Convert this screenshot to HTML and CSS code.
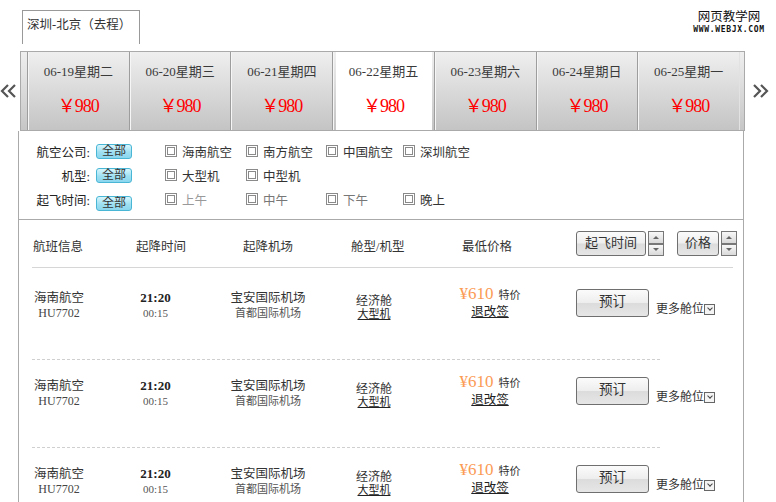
FILE: index.html
```html
<!DOCTYPE html>
<html lang="zh-CN">
<head>
<meta charset="utf-8">
<title>深圳-北京（去程）</title>
<link rel="stylesheet" href="styles.css">
</head>
<body>
<div class="page">
  <div class="head">
    <div class="route">深圳-北京（去程）</div>
    <div class="logo">
      <div class="logo-cn">网页教学网</div>
      <div class="logo-en">WWW.WEBJX.COM</div>
    </div>
  </div>

  <div class="dates">
    <a class="nav prev" href="#">
      <svg width="16" height="14" viewBox="0 0 16 14"><path d="M8 1L2 7l6 6M15 1L9 7l6 6" fill="none" stroke="#555" stroke-width="2.2"/></svg>
    </a>
    <ul class="strip">
      <li class="day"><span class="d">06-19星期二</span><span class="p">￥980</span></li>
      <li class="day"><span class="d">06-20星期三</span><span class="p">￥980</span></li>
      <li class="day"><span class="d">06-21星期四</span><span class="p">￥980</span></li>
      <li class="day on"><span class="d">06-22星期五</span><span class="p">￥980</span></li>
      <li class="day"><span class="d">06-23星期六</span><span class="p">￥980</span></li>
      <li class="day"><span class="d">06-24星期日</span><span class="p">￥980</span></li>
      <li class="day last"><span class="d">06-25星期一</span><span class="p">￥980</span></li>
    </ul>
    <a class="nav next" href="#">
      <svg width="16" height="14" viewBox="0 0 16 14"><path d="M1 1l6 6-6 6M8 1l6 6-6 6" fill="none" stroke="#555" stroke-width="2.2"/></svg>
    </a>
  </div>

  <div class="panel">
    <div class="filters">
      <div class="frow">
        <span class="flabel">航空公司:</span>
        <span class="all">全部</span>
        <div class="opts">
          <label class="opt"><i class="cb"></i>海南航空</label>
          <label class="opt"><i class="cb"></i>南方航空</label>
          <label class="opt"><i class="cb"></i>中国航空</label>
          <label class="opt"><i class="cb"></i>深圳航空</label>
        </div>
      </div>
      <div class="frow">
        <span class="flabel">机型:</span>
        <span class="all">全部</span>
        <div class="opts">
          <label class="opt"><i class="cb"></i>大型机</label>
          <label class="opt"><i class="cb"></i>中型机</label>
        </div>
      </div>
      <div class="frow">
        <span class="flabel">起飞时间:</span>
        <span class="all low">全部</span>
        <div class="opts">
          <label class="opt dim"><i class="cb"></i>上午</label>
          <label class="opt mid"><i class="cb"></i>中午</label>
          <label class="opt mid"><i class="cb"></i>下午</label>
          <label class="opt"><i class="cb"></i>晚上</label>
        </div>
      </div>
    </div>

    <div class="table">
      <div class="thead">
        <span class="th w1">航班信息</span>
        <span class="th w2">起降时间</span>
        <span class="th w3">起降机场</span>
        <span class="th w4">舱型/机型</span>
        <span class="th w5">最低价格</span>
        <span class="sort">
          <span class="btn sbtn t">起飞时间</span>
          <span class="spin"><i class="up"></i><i class="down"></i></span>
        </span>
        <span class="sort">
          <span class="btn sbtn pr">价格</span>
          <span class="spin"><i class="up"></i><i class="down"></i></span>
        </span>
      </div>

      <div class="rows">
        <div class="row">
          <div class="c c1"><div class="l1">海南航空</div><div class="l2">HU7702</div></div>
          <div class="c c2"><div class="l1 b">21:20</div><div class="l2 s">00:15</div></div>
          <div class="c c3"><div class="l1">宝安国际机场</div><div class="l2 s">首都国际机场</div></div>
          <div class="c c4"><div class="m1">经济舱</div><div class="m2"><a href="#">大型机</a></div></div>
          <div class="c c5"><div class="p1"><span class="amt">¥610</span> <span class="tj">特价</span></div><div class="p2"><a href="#">退改签</a></div></div>
          <span class="btn book">预订</span>
          <span class="more">更多舱位<i class="dd"></i></span>
        </div>
        <div class="sep"></div>
        <div class="row">
          <div class="c c1"><div class="l1">海南航空</div><div class="l2">HU7702</div></div>
          <div class="c c2"><div class="l1 b">21:20</div><div class="l2 s">00:15</div></div>
          <div class="c c3"><div class="l1">宝安国际机场</div><div class="l2 s">首都国际机场</div></div>
          <div class="c c4"><div class="m1">经济舱</div><div class="m2"><a href="#">大型机</a></div></div>
          <div class="c c5"><div class="p1"><span class="amt">¥610</span> <span class="tj">特价</span></div><div class="p2"><a href="#">退改签</a></div></div>
          <span class="btn book">预订</span>
          <span class="more">更多舱位<i class="dd"></i></span>
        </div>
        <div class="sep"></div>
        <div class="row">
          <div class="c c1"><div class="l1">海南航空</div><div class="l2">HU7702</div></div>
          <div class="c c2"><div class="l1 b">21:20</div><div class="l2 s">00:15</div></div>
          <div class="c c3"><div class="l1">宝安国际机场</div><div class="l2 s">首都国际机场</div></div>
          <div class="c c4"><div class="m1">经济舱</div><div class="m2"><a href="#">大型机</a></div></div>
          <div class="c c5"><div class="p1"><span class="amt">¥610</span> <span class="tj">特价</span></div><div class="p2"><a href="#">退改签</a></div></div>
          <span class="btn book">预订</span>
          <span class="more">更多舱位<i class="dd"></i></span>
        </div>
      </div>
    </div>
  </div>
</div>
</body>
</html>
```

FILE: styles.css
```css
html, body {
  margin: 0;
  padding: 0;
  overflow: hidden;
  background: #fff;
}
body {
  font-family: "Liberation Serif", "Noto Sans CJK SC", serif;
  font-size: 12.5px;
  color: #333;
}
a { color: #222; }
ul { margin: 0; padding: 0; list-style: none; }

.page { width: 776px; }

/* header */
.head {
  display: flex;
  height: 51px;
}
.route {
  box-sizing: border-box;
  width: 118px;
  height: 34px;
  margin: 10px 0 0 22px;
  padding-left: 4px;
  border: 1px solid #999;
  border-bottom: 0;
  line-height: 28px;
  white-space: nowrap;
}
.logo {
  margin: 8px 10px 0 auto;
  width: 74px;
  text-align: center;
}
.logo-cn {
  font-family: "Noto Sans CJK SC", sans-serif;
  font-size: 12.5px;
  line-height: 16px;
  color: #111;
}
.logo-en {
  font-family: "DejaVu Sans Mono", monospace;
  font-weight: bold;
  font-size: 8px;
  line-height: 9px;
  color: #111;
  letter-spacing: 0.7px;
  margin-top: 1px;
  white-space: nowrap;
}

/* date strip */
.dates {
  display: flex;
  align-items: center;
  height: 80px;
}
.nav {
  display: flex;
  justify-content: flex-start;
  width: 20px;
  flex-shrink: 0;
}
.nav.next { width: 31px; padding-left: 8px; box-sizing: border-box; }
.strip {
  box-sizing: border-box;
  display: flex;
  flex-shrink: 0;
  width: 725px;
  height: 80px;
  padding: 0 4px 0 6px;
  border: 1px solid #aaa;
  background: linear-gradient(#efefef, #c6c6c6);
}
.day {
  flex: 1;
  display: flex;
  flex-direction: column;
  align-items: center;
  border-left: 1px solid #9d9d9d;
  box-shadow: inset 1px 0 0 #f6f6f6;
  background: linear-gradient(#efefef, #c4c4c4);
}
.day.last { border-right: 1px solid #e2e2e2; }
.day.on {
  background: linear-gradient(#fff, #fff) 3px 0 / calc(100% - 5px) 100% no-repeat, linear-gradient(#efefef, #c4c4c4);
}
.day .d {
  padding-top: 12px;
  font-size: 13px;
  line-height: 16px;
  color: #3a3a3a;
  white-space: nowrap;
}
.day .p {
  margin-top: 14px;
  font-size: 18px;
  line-height: 24px;
  color: #f00;
  letter-spacing: -1px;
}

/* panel */
.panel {
  width: 726px;
  margin-left: 18px;
  box-sizing: border-box;
  border-left: 1px solid #aaa;
  border-right: 1px solid #aaa;
}
.filters {
  box-sizing: border-box;
  height: 89px;
  padding-top: 8px;
  border-bottom: 1px solid #aaa;
}
.frow {
  display: flex;
  align-items: center;
  height: 24px;
}
.flabel {
  width: 71px;
  flex-shrink: 0;
  text-align: right;
  font-size: 12.5px;
  color: #222;
}
.all {
  box-sizing: border-box;
  flex-shrink: 0;
  width: 36px;
  height: 15px;
  margin-left: 6px;
  border: 1px solid #49b6d6;
  border-radius: 3px;
  background: linear-gradient(#d7f6fd, #9fe0f2 55%, #8ad6ee);
  font-size: 12px;
  line-height: 13px;
  text-align: center;
  color: #333;
}
.all.low { margin-top: 8px; }
.opts {
  display: grid;
  grid-template-columns: 81px 80px 77px auto;
  margin-left: 33px;
}
.opt {
  display: flex;
  align-items: center;
  gap: 5px;
  font-size: 12.5px;
  color: #333;
  white-space: nowrap;
}
.opt.dim { color: #999; }
.opt.mid { color: #777; }
.cb {
  box-sizing: border-box;
  display: flex;
  align-items: center;
  justify-content: center;
  width: 12px;
  height: 12px;
  border: 1px solid #8a8a8a;
  background: #fff;
}
.cb::after {
  content: "";
  box-sizing: border-box;
  width: 8px;
  height: 8px;
  border: 1px solid #8a8a8a;
}

/* table */
.table {
  padding: 0 10px 0 13px;
}
.thead {
  display: flex;
  align-items: center;
  height: 47px;
  padding-left: 1px;
  border-bottom: 1px solid #d6d6d6;
}
.thead > * { flex-shrink: 0; }
.th {
  margin-top: 4px;
  font-size: 12.5px;
  color: #333;
  white-space: nowrap;
}
.w1 { width: 103px; }
.w2 { width: 107px; }
.w3 { width: 108px; }
.w4 { width: 111px; }
.w5 { width: 114px; }
.sort {
  display: flex;
  align-items: center;
  gap: 2px;
}
.sort + .sort { margin-left: 13px; }
.btn {
  box-sizing: border-box;
  display: inline-block;
  flex-shrink: 0;
  border: 1px solid #6f6f6f;
  border-radius: 3px;
  background: linear-gradient(#fbfbfb, #eeeeee 48%, #dcdcdc 52%, #e6e6e6);
  text-align: center;
  color: #333;
  font-size: 13px;
}
.sbtn {
  height: 25px;
  line-height: 22px;
}
.sbtn.t { width: 70px; }
.sbtn.pr { width: 42px; }
.spin {
  display: flex;
  flex-direction: column;
  width: 16px;
}
.spin i {
  box-sizing: border-box;
  display: flex;
  align-items: center;
  justify-content: center;
  height: 12.5px;
  border: 1px solid #777;
  background: linear-gradient(#f8f8f8, #d9d9d9);
}
.spin i::after {
  content: "";
  border-left: 3px solid transparent;
  border-right: 3px solid transparent;
}
.spin .up::after { border-bottom: 3px solid #666; }
.spin .down::after { border-top: 3px solid #666; }

.rows { padding-top: 4px; }
.row {
  display: flex;
  align-items: flex-start;
  height: 87px;
}
.row > * { flex-shrink: 0; }
.sep {
  width: 628px;
  border-top: 1px dashed #cfcfcf;
}
.c { text-align: center; white-space: nowrap; }
.c1 { width: 54px; padding-top: 18px; }
.c2 { width: 139px; padding-top: 18px; }
.c3 { width: 86px; padding-top: 18px; }
.c4 { width: 126px; padding-top: 22px; }
.c5 { width: 106px; padding-top: 13px; }
.l1 { line-height: 16px; font-size: 12.5px; }
.l2 { line-height: 15px; font-size: 12px; color: #444; }
.l1.b { font-weight: bold; font-size: 13px; color: #222; }
.l2.s { font-size: 11px; color: #555; }
.m1 { line-height: 14px; font-size: 12px; }
.m2 { line-height: 12px; font-size: 11px; }
.p1 { line-height: 18px; }
.amt { font-size: 17px; color: #fb9b55; }
.tj { font-size: 11px; color: #333; margin-left: 2px; }
.p2 { line-height: 16px; font-size: 12.5px; }
.book {
  width: 73px;
  height: 28px;
  margin: 17px 0 0 33px;
  line-height: 24px;
  font-size: 13.5px;
}
.more {
  display: flex;
  align-items: center;
  margin: 29px 0 0 7px;
  line-height: 16px;
  font-size: 12px;
  color: #333;
  white-space: nowrap;
}
.dd {
  box-sizing: border-box;
  display: flex;
  align-items: center;
  justify-content: center;
  width: 11px;
  height: 11px;
  border: 1px solid #666;
  background: #f4f4f4;
}
.dd::after {
  content: "";
  width: 3px;
  height: 3px;
  margin-top: -3px;
  border-right: 1.5px solid #444;
  border-bottom: 1.5px solid #444;
  transform: rotate(45deg);
}
```
